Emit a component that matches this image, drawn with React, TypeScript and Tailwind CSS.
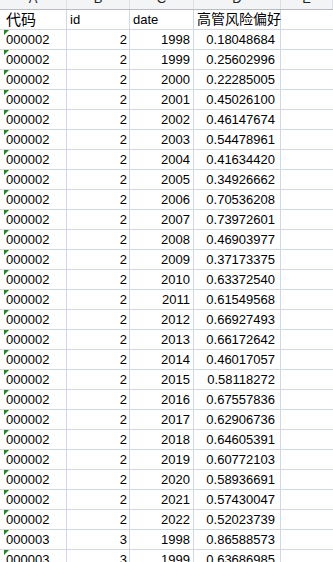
const rows: [string, number, number, string][] = [
  ["000002", 2, 1998, "0.18048684"],
  ["000002", 2, 1999, "0.25602996"],
  ["000002", 2, 2000, "0.22285005"],
  ["000002", 2, 2001, "0.45026100"],
  ["000002", 2, 2002, "0.46147674"],
  ["000002", 2, 2003, "0.54478961"],
  ["000002", 2, 2004, "0.41634420"],
  ["000002", 2, 2005, "0.34926662"],
  ["000002", 2, 2006, "0.70536208"],
  ["000002", 2, 2007, "0.73972601"],
  ["000002", 2, 2008, "0.46903977"],
  ["000002", 2, 2009, "0.37173375"],
  ["000002", 2, 2010, "0.63372540"],
  ["000002", 2, 2011, "0.61549568"],
  ["000002", 2, 2012, "0.66927493"],
  ["000002", 2, 2013, "0.66172642"],
  ["000002", 2, 2014, "0.46017057"],
  ["000002", 2, 2015, "0.58118272"],
  ["000002", 2, 2016, "0.67557836"],
  ["000002", 2, 2017, "0.62906736"],
  ["000002", 2, 2018, "0.64605391"],
  ["000002", 2, 2019, "0.60772103"],
  ["000002", 2, 2020, "0.58936691"],
  ["000002", 2, 2021, "0.57430047"],
  ["000002", 2, 2022, "0.52023739"],
  ["000003", 3, 1998, "0.86588573"],
  ["000003", 3, 1999, "0.63686985"],
];

const font = "font-['Liberation_Sans','Noto_Sans_CJK_SC',sans-serif]";

// column letter strip, mostly scrolled out of view at the top
function ColHeaders() {
  const cols: [string, string][] = [
    ["A", "w-[67px]"],
    ["B", "w-[63px]"],
    ["C", "w-[64px]"],
    ["D", "w-[87px]"],
    ["E", "flex-1"],
  ];
  return (
    <div className="flex h-[10px] bg-[#f3f4f6] border-b border-[#b9bcc2] overflow-hidden">
      {cols.map(([l, w]) => (
        <div key={l} className={`${w} border-r border-[#dcdfe4] text-center text-[13px] leading-[20px] -mt-[11px] text-[#222]`}>
          {l}
        </div>
      ))}
    </div>
  );
}

function Row({ children }: { children: React.ReactNode }) {
  return <div className="flex h-[20px] border-b border-[#d0d7e5] leading-[19px] text-[13px] text-black">{children}</div>;
}

export default function App() {
  return (
    <div className={`w-[333px] h-[562px] overflow-hidden bg-white ${font}`}>
      <ColHeaders />
      <Row>
        <div className="w-[67px] border-r border-[#d0d7e5] pl-[6px] text-[15px]">代码</div>
        <div className="w-[63px] border-r border-[#d0d7e5] pl-[3px]">id</div>
        <div className="w-[64px] border-r border-[#d0d7e5] pl-[3px]">date</div>
        <div className="w-[87px] border-r border-[#d0d7e5] pl-[3px] text-[14px] whitespace-nowrap">高管风险偏好</div>
        <div className="flex-1" />
      </Row>
      {rows.map(([code, id, year, v], i) => (
        <Row key={i}>
          <div className="relative w-[67px] border-r border-[#d0d7e5] pl-[6px]">
            <span className="absolute left-[4px] top-0 w-0 h-0 border-t-[5px] border-t-[#1f8b1f] border-r-[5px] border-r-transparent" />
            {code}
          </div>
          <div className="w-[63px] border-r border-[#d0d7e5] pr-[2px] text-right">{id}</div>
          <div className="w-[64px] border-r border-[#d0d7e5] pr-[3px] text-right">{year}</div>
          <div className="w-[87px] border-r border-[#d0d7e5] pr-[5px] text-right">{v}</div>
          <div className="flex-1" />
        </Row>
      ))}
    </div>
  );
}
